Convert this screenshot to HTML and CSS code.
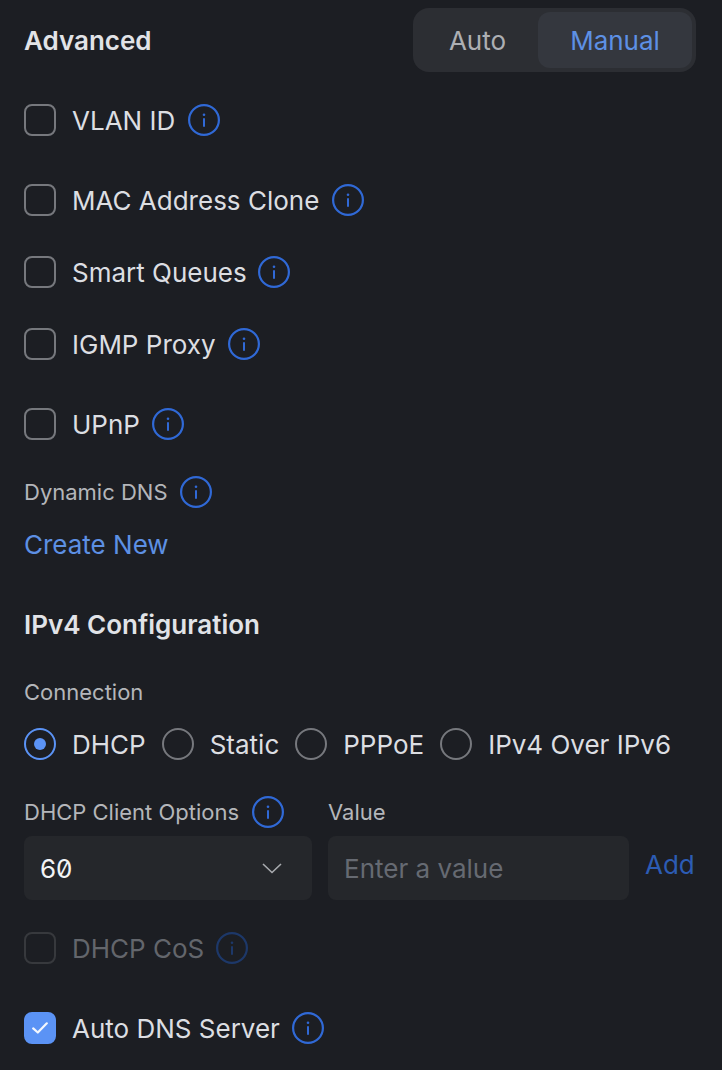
FILE: index.html
```html
<!DOCTYPE html>
<html lang="en">
<head>
<meta charset="utf-8">
<title>Advanced</title>
<link rel="stylesheet" href="styles.css">
</head>
<body>
<svg class="defs" width="0" height="0" aria-hidden="true">
  <symbol id="info" viewBox="0 0 32 32">
    <circle cx="16" cy="16" r="14.9" fill="none" stroke="currentColor" stroke-width="2.2"/>
    <circle cx="16" cy="10.8" r="1.3" fill="currentColor"/>
    <rect x="15" y="14" width="2" height="9" rx="1" fill="currentColor"/>
  </symbol>
</svg>
<main class="panel">
  <header class="head">
    <h2 class="title">Advanced</h2>
    <div class="segment">
      <span class="seg seg-auto">Auto</span>
      <span class="seg seg-on">Manual</span>
    </div>
  </header>

  <div class="check row-vlan"><span class="box"></span><span class="label">VLAN ID</span><svg class="info info-wide"><use href="#info"/></svg></div>
  <div class="check row-mac"><span class="box"></span><span class="label">MAC Address Clone</span><svg class="info info-wide"><use href="#info"/></svg></div>
  <div class="check row-smart"><span class="box"></span><span class="label">Smart Queues</span><svg class="info info-tight"><use href="#info"/></svg></div>
  <div class="check row-igmp"><span class="box"></span><span class="label">IGMP Proxy</span><svg class="info"><use href="#info"/></svg></div>
  <div class="check row-upnp"><span class="box"></span><span class="label">UPnP</span><svg class="info"><use href="#info"/></svg></div>

  <div class="small-head row-ddns"><span class="small">Dynamic DNS</span><svg class="info"><use href="#info"/></svg></div>
  <a class="link">Create New</a>

  <h2 class="title section">IPv4 Configuration</h2>
  <div class="small connection">Connection</div>

  <div class="radios">
    <div class="radio-item"><span class="radio radio-on"></span><span class="label">DHCP</span></div>
    <div class="radio-item"><span class="radio"></span><span class="label">Static</span></div>
    <div class="radio-item"><span class="radio"></span><span class="label">PPPoE</span></div>
    <div class="radio-item"><span class="radio"></span><span class="label">IPv4 Over IPv6</span></div>
  </div>

  <div class="options">
    <div class="col-select">
      <div class="small-head"><span class="small">DHCP Client Options</span><svg class="info info-wide"><use href="#info"/></svg></div>
      <div class="field select"><span class="value">60</span>
        <svg class="chevron" viewBox="0 0 20 11"><path d="M1 1 L10 9.5 L19 1" fill="none" stroke="currentColor" stroke-width="1.6"/></svg>
      </div>
    </div>
    <div class="col-value">
      <div class="small-head"><span class="small">Value</span></div>
      <div class="field"><span class="placeholder">Enter a value</span></div>
    </div>
    <a class="add">Add</a>
  </div>

  <div class="check disabled row-cos"><span class="box"></span><span class="label">DHCP CoS</span><svg class="info"><use href="#info"/></svg></div>
  <div class="check row-auto"><span class="box box-on">
    <svg class="tick" viewBox="0 0 16 12"><path d="M1.2 6.4 L5.8 10.5 L14.8 1.3" fill="none" stroke="#f4f7fd" stroke-width="2.2" stroke-linecap="round" stroke-linejoin="round"/></svg>
  </span><span class="label">Auto DNS Server</span><svg class="info"><use href="#info"/></svg></div>
</main>
</body>
</html>
```

FILE: styles.css
```css
* { box-sizing: border-box; }
html, body { margin: 0; padding: 0; }
body {
  width: 722px;
  height: 1070px;
  overflow: hidden;
  background: #1c1e23;
  font-family: Inter, "Liberation Sans", sans-serif;
  color: #dfe1e5;
}
.defs { position: absolute; }
.panel { padding: 8px 24px 0; display: flex; flex-direction: column; }
.head { display: flex; justify-content: space-between; align-items: center; height: 64px; margin-right: 2px; }
.title { margin: 0; font-size: 26px; line-height: 32px; font-weight: 600; color: #e1e3e7; }
.head .title { padding-top: 2px; }
.segment { display: flex; width: 283px; height: 64px; padding: 4px; border-radius: 16px; background: #2c2e33; }
.seg { display: flex; align-items: center; justify-content: center; font-size: 26px; border-radius: 12px; }
.seg-auto { width: 121px; color: #adafb3; }
.seg-on { width: 154px; background: #34373e; color: #5d90e4; }
.check { display: flex; align-items: center; height: 32px; }
.box { width: 32px; height: 32px; flex: none; border: 2px solid #76787d; border-radius: 8px; display: flex; align-items: center; justify-content: center; }
.box-on { background: #5b93f5; border-color: #5b93f5; }
.tick { width: 16px; height: 12px; }
.label { margin-left: 16px; margin-top: 2px; font-size: 26px; line-height: 32px; color: #dcdee2; white-space: nowrap; }
.info { width: 32px; height: 32px; flex: none; margin-left: 12px; color: #3069d6; }
.info-wide { margin-left: 13px; }
.info-tight { margin-left: 11px; }
.row-vlan { margin-top: 32px; }
.row-mac { margin-top: 48px; }
.row-smart { margin-top: 40px; }
.row-igmp { margin-top: 40px; }
.row-upnp { margin-top: 48px; }
.small-head { display: flex; align-items: center; height: 32px; }
.small { font-size: 22px; line-height: 32px; color: #b4b6ba; white-space: nowrap; }
.row-ddns { margin-top: 36px; }
.link { margin-top: 21px; font-size: 26px; line-height: 32px; color: #5d90e4; }
.section { margin-top: 48px; }
.connection { margin-top: 35px; }
.radios { display: flex; gap: 16px; margin-top: 20px; }
.radio-item { display: flex; align-items: center; height: 32px; }
.radio { width: 32px; height: 32px; flex: none; border: 2px solid #76787d; border-radius: 50%; display: flex; align-items: center; justify-content: center; }
.radio-on { border-color: #5b93f5; }
.radio-on::after { content: ""; width: 12px; height: 12px; border-radius: 50%; background: #5b93f5; }
.options { display: flex; gap: 16px; margin-top: 36px; }
.col-select { width: 288px; flex: none; }
.col-value { width: 301px; flex: none; }
.field { height: 64px; margin-top: 8px; padding: 0 16px; border-radius: 8px; background: #25272b; display: flex; align-items: center; justify-content: space-between; font-size: 26px; }
.select { padding-right: 30px; }
.value { color: #f2f3f5; font-feature-settings: "zero" 1; }
.placeholder { color: #666a72; }
.chevron { width: 20px; height: 11px; color: #a9abaf; }
.add { margin-top: 53px; font-size: 26px; line-height: 32px; color: #2c5cb4; }
.disabled .box { border-color: #37393d; }
.disabled .label { color: #63666c; }
.disabled .info { color: #1d3869; }
.row-cos { margin-top: 32px; }
.row-auto { margin-top: 48px; }
```
